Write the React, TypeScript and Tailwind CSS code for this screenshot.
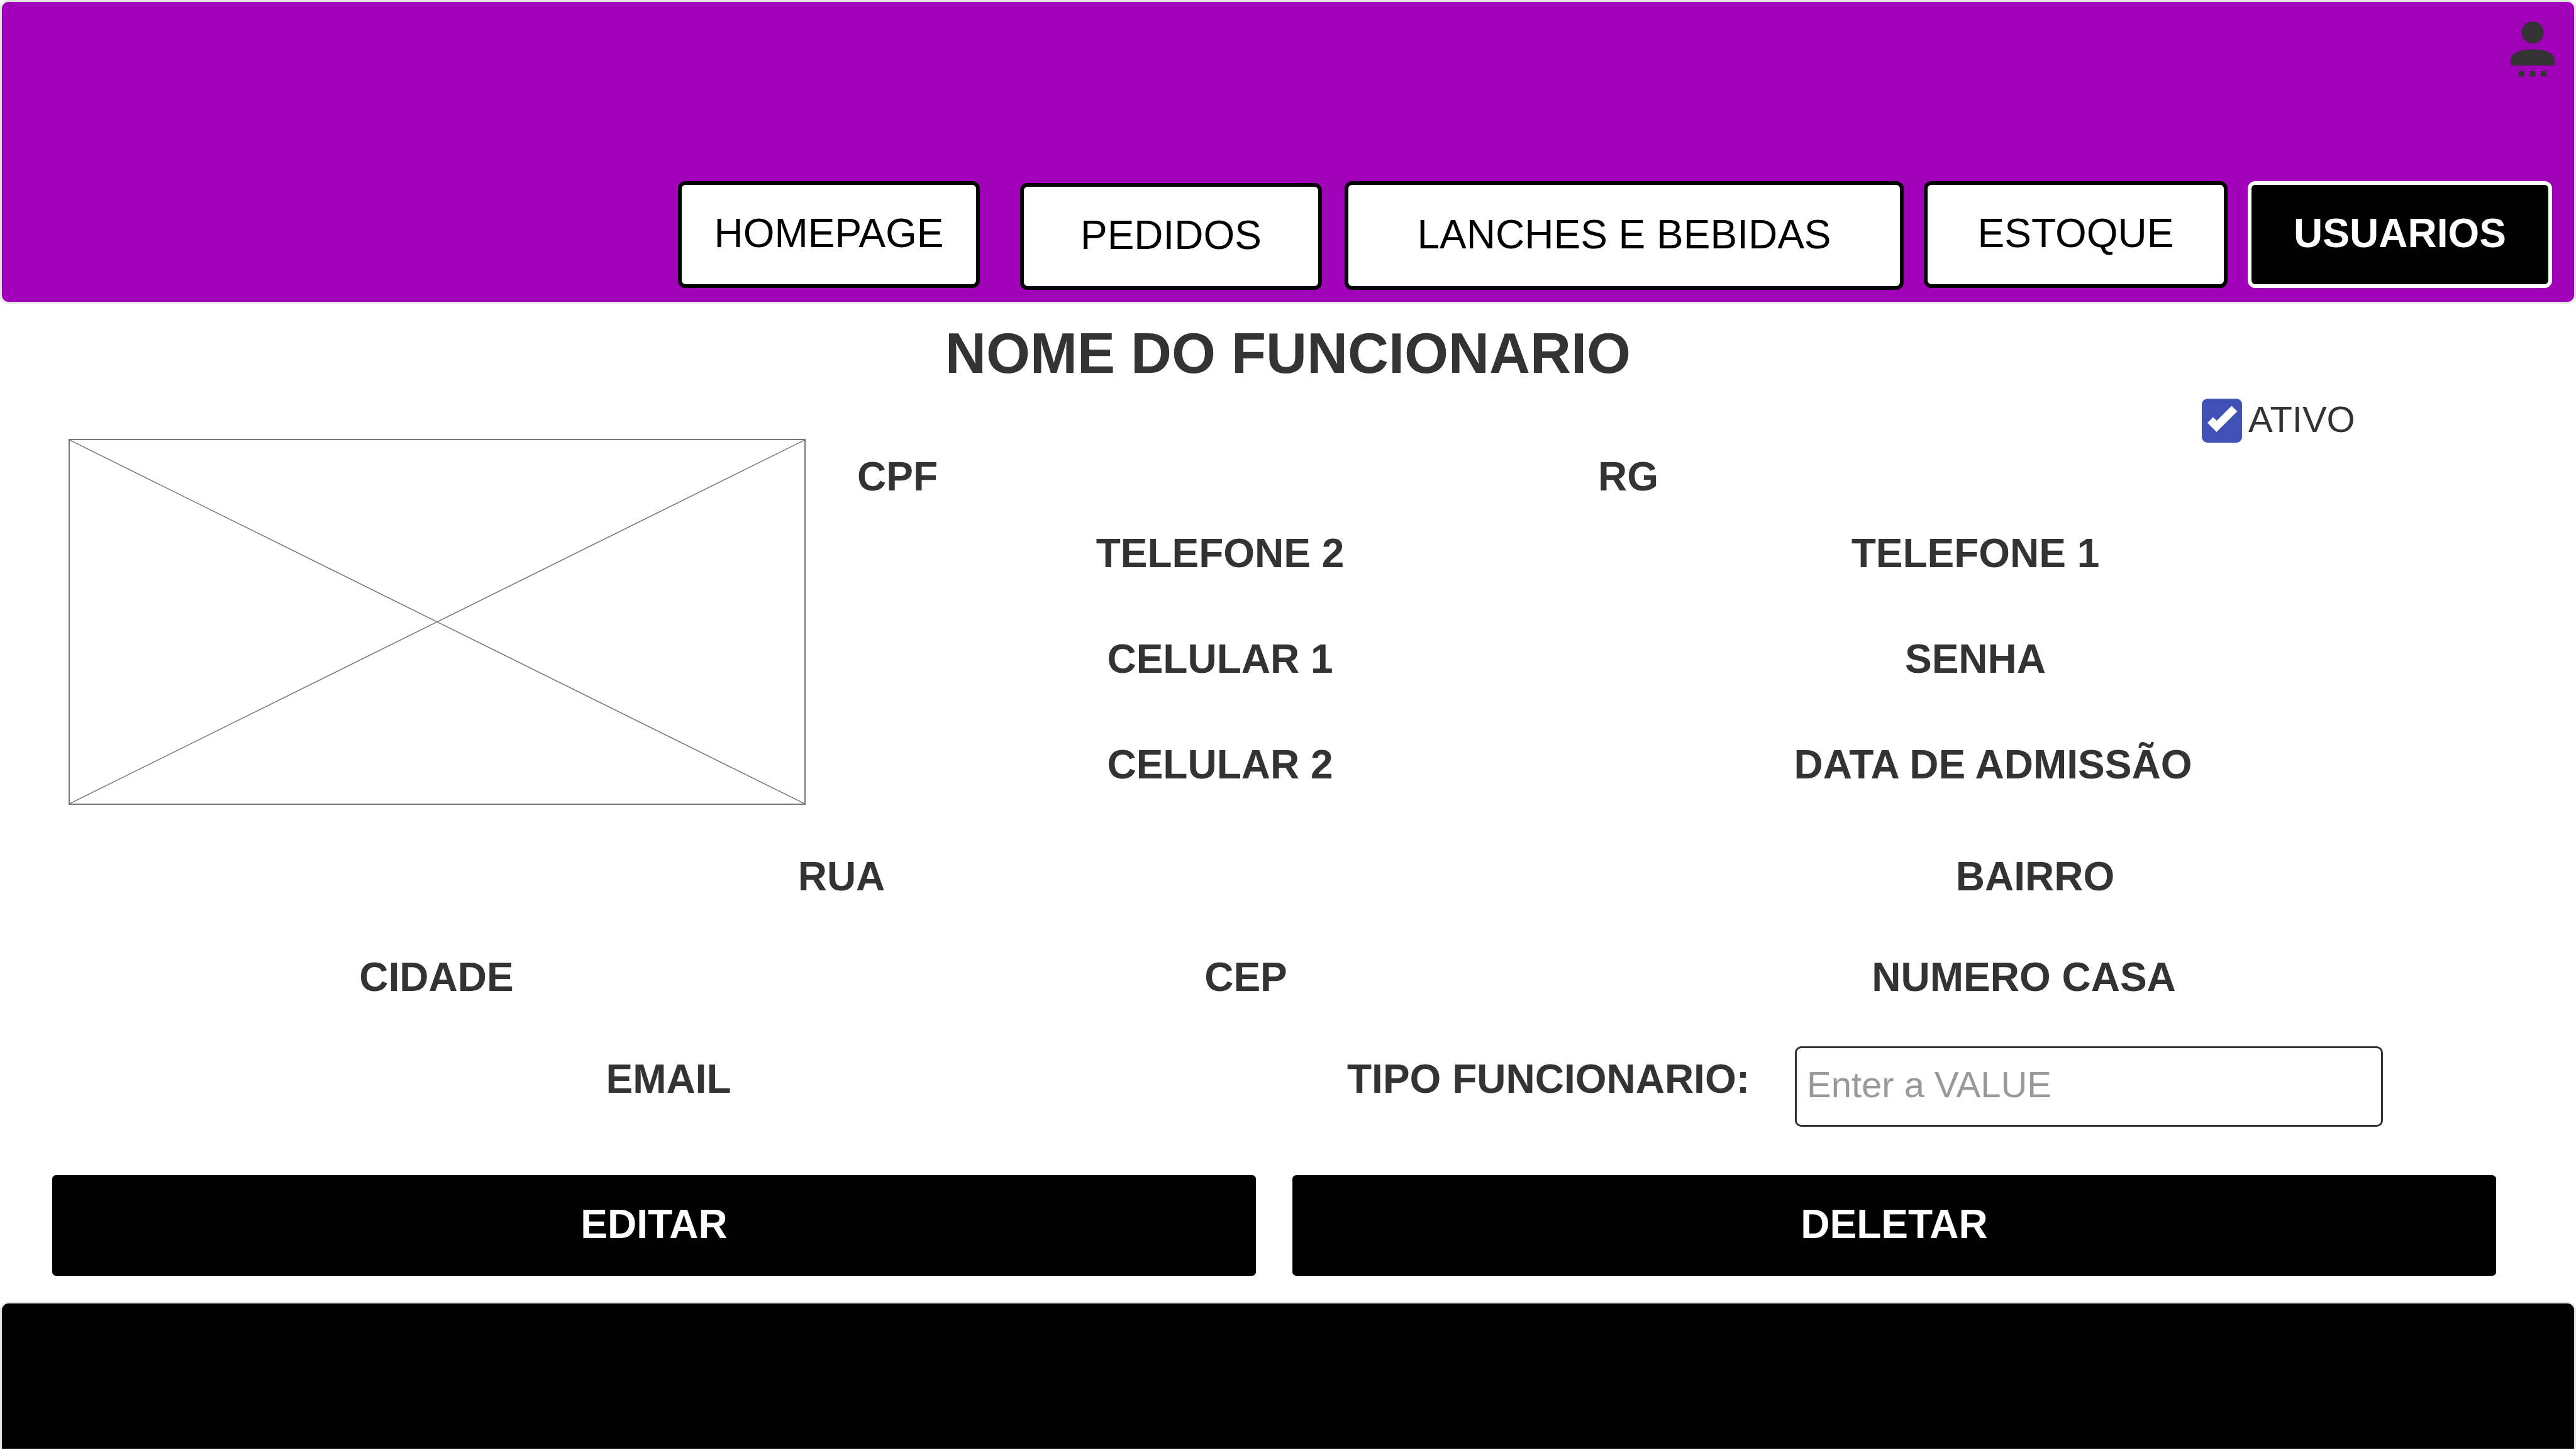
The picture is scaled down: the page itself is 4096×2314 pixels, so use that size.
import React from "react";

type NavItem = { label: string; place: string; active?: boolean };

const NAV: NavItem[] = [
  { label: "HOMEPAGE", place: "col-start-2 h-[170px] self-start" },
  { label: "PEDIDOS", place: "col-start-4 h-[170px] self-end" },
  { label: "LANCHES E BEBIDAS", place: "col-start-6" },
  { label: "ESTOQUE", place: "col-start-8 h-[170px] self-start" },
  { label: "USUARIOS", place: "col-start-10 h-[170px] self-start", active: true },
];

function UserIcon() {
  return (
    <svg viewBox="0 0 88 110" className="h-[88px] w-[70px]" fill="#333333" aria-hidden="true">
      <circle cx="44" cy="22" r="22" />
      <path d="M0 88V77C0 62 22 55.5 44 55.5S88 62 88 77V88Z" />
      <path d="M16.5 99h11v11h-11zM38.5 99h11v11h-11zM60.5 99h11v11h-11z" />
    </svg>
  );
}

function Header() {
  return (
    <header className="flex h-[483px] flex-col justify-between rounded-[14px] border-[3px] border-[#e3e3e3] bg-[#a000b7] pt-[31px] pb-[19px]">
      <div className="flex justify-end pr-[31px]">
        <button type="button" aria-label="Conta">
          <UserIcon />
        </button>
      </div>
      <nav className="grid h-[173px] grid-cols-[1075fr_480fr_64fr_480fr_36fr_889fr_32fr_483fr_32fr_484fr_35fr]">
        {NAV.map((item) => (
          <button
            key={item.label}
            type="button"
            className={
              "row-start-1 flex items-center justify-center rounded-[12px] border-[6px] pb-1 text-[64px] leading-[80px] whitespace-nowrap " +
              item.place +
              (item.active
                ? " border-white bg-black font-bold text-white"
                : " border-black bg-white font-normal text-black")
            }
          >
            {item.label}
          </button>
        ))}
      </nav>
    </header>
  );
}

function Label({ children, className = "" }: { children: React.ReactNode; className?: string }) {
  return <p className={"text-center whitespace-nowrap " + className}>{children}</p>;
}

function Photo() {
  return (
    <div className="h-[582px] border-2 border-[#777777]">
      <svg
        className="block h-full w-full"
        viewBox="0 0 100 100"
        preserveAspectRatio="none"
        stroke="#777777"
        strokeWidth="1.5"
        aria-hidden="true"
      >
        <line x1="0" y1="0" x2="100" y2="100" vectorEffect="non-scaling-stroke" />
        <line x1="100" y1="0" x2="0" y2="100" vectorEffect="non-scaling-stroke" />
      </svg>
    </div>
  );
}

function ActiveToggle() {
  return (
    <div className="grid grid-cols-[2220fr_595fr]">
      <label className="col-start-2 flex h-[70px] gap-[10px] text-[58px] leading-[66px] font-normal">
        <span className="grid h-[70px] w-[64px] shrink-0">
          <input
            type="checkbox"
            defaultChecked
            className="col-start-1 row-start-1 h-[70px] w-[64px] appearance-none rounded-[9px] bg-[#3f51b5]"
          />
          <svg
            viewBox="0 0 80 88"
            className="pointer-events-none col-start-1 row-start-1 h-[70px] w-[64px]"
            aria-hidden="true"
          >
            <path d="M59.3 14.3L70.7 25.3L29.3 66.7L11 48.3L22.3 37L29.7 44Z" fill="#ffffff" />
          </svg>
        </span>
        ATIVO
      </label>
    </div>
  );
}

export default function App() {
  return (
    <div className="min-h-screen bg-white font-['Liberation_Sans',Arial,sans-serif] text-[64px] leading-[80px] font-bold text-[#333333]">
      <Header />
      <main>
        <h1 className="pt-[27px] text-center text-[90px] leading-[104px]">NOME DO FUNCIONARIO</h1>

        <section className="grid grid-cols-[109fr_1172fr_2815fr] pt-5">
          <div className="col-start-2 self-end">
            <Photo />
          </div>
          <div>
            <ActiveToggle />
            <div className="grid grid-cols-[292fr_2032fr_491fr] pt-[14px]">
              <Label>CPF</Label>
              <Label>RG</Label>
            </div>
            <div className="grid grid-cols-[1318fr_1084fr_413fr] gap-y-[88px] pt-[42px] pb-6">
              <Label className="col-start-1">TELEFONE 2</Label>
              <Label className="col-start-2">TELEFONE 1</Label>
              <Label className="col-start-1">CELULAR 1</Label>
              <Label className="col-start-2">SENHA</Label>
              <Label className="col-start-1">CELULAR 2</Label>
              <Label className="col-start-2 pl-14">DATA DE ADMISSÃO</Label>
            </div>
          </div>
        </section>

        <section className="grid grid-cols-[2676fr_1120fr_300fr] pt-[74px]">
          <Label>RUA</Label>
          <Label>BAIRRO</Label>
        </section>
        <section className="grid grid-cols-[1388fr_1186fr_1288fr_234fr] pt-20">
          <Label>CIDADE</Label>
          <Label>CEP</Label>
          <Label>NUMERO CASA</Label>
        </section>
        <section className="grid grid-cols-[2126fr_728fr_935fr_307fr] pt-[70px]">
          <Label className="pt-3">EMAIL</Label>
          <label htmlFor="tipo" className="pt-3 pl-4 whitespace-nowrap">
            TIPO FUNCIONARIO:
          </label>
          <input
            id="tipo"
            type="text"
            placeholder="Enter a VALUE"
            className="h-[128px] w-full rounded-[10px] border-[3px] border-[#333333] bg-white px-4 pb-2 text-[58px] leading-[66px] font-normal placeholder:text-[#999999]"
          />
        </section>

        <section className="grid grid-cols-[83fr_1914fr_58fr_1914fr_127fr] pt-[77px]">
          <button type="button" className="col-start-2 h-[160px] rounded-[6px] bg-black pb-1 text-white">
            EDITAR
          </button>
          <button type="button" className="col-start-4 h-[160px] rounded-[6px] bg-black pb-1 text-white">
            DELETAR
          </button>
        </section>
      </main>
      <footer className="mt-[41px] h-[234px] rounded-t-[14px] border-x-[3px] border-t-[3px] border-[#e3e3e3] bg-black" />
    </div>
  );
}
